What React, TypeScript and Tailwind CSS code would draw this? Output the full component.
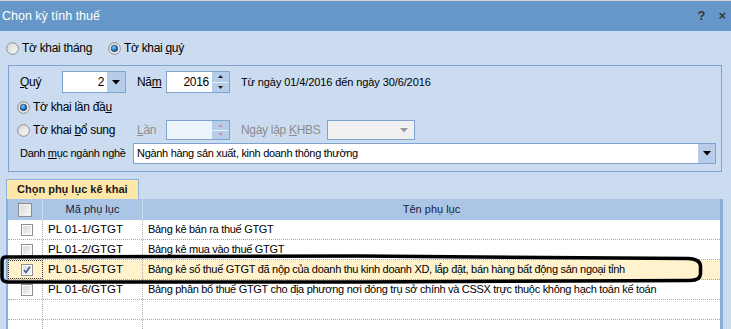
import React from 'react';

const rows = [
  { code: 'PL 01-1/GTGT', name: 'Bảng kê bán ra thuế GTGT', checked: false },
  { code: 'PL 01-2/GTGT', name: 'Bảng kê mua vào thuế GTGT', checked: false },
  {
    code: 'PL 01-5/GTGT',
    name: 'Bảng kê số thuế GTGT đã nộp của doanh thu kinh doanh XD, lắp đặt, bán hàng bất động sản ngoại tỉnh',
    checked: true,
  },
  {
    code: 'PL 01-6/GTGT',
    name: 'Bảng phân bổ thuế GTGT cho địa phương nơi đóng trụ sở chính và CSSX trực thuộc không hạch toán kế toán',
    checked: false,
  },
];

const Radio = ({ on }: { on?: boolean }) => (
  <svg width="13" height="13" viewBox="0 0 13 13" className="shrink-0">
    <defs>
      <linearGradient id="rg" x1="0" y1="0" x2="1" y2="1">
        <stop offset="0" stopColor="#d6d6d6" />
        <stop offset="1" stopColor="#fbfbfb" />
      </linearGradient>
      <radialGradient id="rd" cx="0.4" cy="0.35" r="0.7">
        <stop offset="0" stopColor="#8fd0f5" />
        <stop offset="0.6" stopColor="#1f6fb5" />
        <stop offset="1" stopColor="#0d3f78" />
      </radialGradient>
    </defs>
    <circle cx="6.5" cy="6.5" r="5.8" fill="url(#rg)" stroke="#8a8a8a" strokeWidth="1" />
    {on && <circle cx="6.5" cy="6.5" r="3.3" fill="url(#rd)" stroke="#1b3f6e" strokeWidth="0.6" />}
  </svg>
);

const Check = ({ on, size = 12 }: { on?: boolean; size?: number }) => (
  <svg width={size} height={size} viewBox="0 0 12 12" className="shrink-0">
    <defs>
      <linearGradient id="cg" x1="0" y1="0" x2="1" y2="1">
        <stop offset="0" stopColor="#d8d8d8" />
        <stop offset="1" stopColor="#f6f6f6" />
      </linearGradient>
    </defs>
    <rect x="0.5" y="0.5" width="11" height="11" fill="#fff" stroke="#8f8f8f" />
    <rect x="2" y="2" width="8" height="8" fill="url(#cg)" />
    {on && <path d="M3 6 L5 8.5 L9 2.8" fill="none" stroke="#3d5f9c" strokeWidth="1.6" />}
  </svg>
);

const Arrow = ({ color = '#000' }: { color?: string }) => (
  <svg width="8" height="5" viewBox="0 0 8 5">
    <path d="M0 0 H8 L4 4.5 Z" fill={color} />
  </svg>
);

const Spin = ({ value, disabled }: { value?: string; disabled?: boolean }) => (
  <div
    className={
      'flex h-full w-[64px] border border-[#7fa3cf] ' +
      (disabled ? 'bg-[#eef4fb]' : 'bg-white')
    }
  >
    <div className="flex flex-1 items-center justify-end pr-[3px] text-[12px]">{value}</div>
    <div className="flex w-[17px] flex-col bg-[#b6cde9]">
      <div className="flex flex-1 items-center justify-center border-b border-[#e6eef8]">
        <svg width="5" height="3" viewBox="0 0 5 3">
          <path d="M0 3 L2.5 0 L5 3 Z" fill={disabled ? '#c29aa4' : '#222'} />
        </svg>
      </div>
      <div className="flex flex-1 items-center justify-center">
        <svg width="5" height="3" viewBox="0 0 5 3">
          <path d="M0 0 H5 L2.5 3 Z" fill={disabled ? '#c29aa4' : '#222'} />
        </svg>
      </div>
    </div>
  </div>
);

export default function App() {
  return (
    <div className="relative h-[329px] w-[731px] overflow-hidden whitespace-nowrap bg-[#cbdcf1] font-['Liberation_Sans',Arial,sans-serif] text-[11px] tracking-[-0.3px] text-black">
      <div className="h-px bg-[#d2d2d2]" />
      {/* title bar */}
      <div className="flex h-[30px] items-center justify-between bg-[#6598c9] pl-[2px] pr-[5px]">
        <span className="text-[12.5px] tracking-normal text-white">Chọn kỳ tính thuế</span>
        <div className="flex items-center gap-[13px] text-[13px] font-bold tracking-normal text-[#3a3a3a]">
          <span>?</span>
          <span>×</span>
        </div>
      </div>

      {/* monthly / quarterly */}
      <div className="flex h-[34px] items-center pl-[6px] text-[12px]">
        <div className="flex w-[102px] items-center">
          <Radio />
          <span className="ml-[3px]">
            Tờ khai thán<span className="underline">g</span>
          </span>
        </div>
        <Radio on />
        <span className="ml-[3px]">
          Tờ khai <span className="underline">q</span>uý
        </span>
      </div>

      {/* group box */}
      <div className="ml-[8px] flex h-[107px] w-[714px] flex-col border border-[#7fa3cf] pl-[11px] text-[12px]">
        <div className="mt-[5px] flex h-[22px] items-center">
          <span className="w-[42px]">
            <span className="underline">Q</span>uý
          </span>
          <div className="flex h-full w-[64px] border border-[#7fa3cf] bg-white">
            <div className="flex flex-1 items-center justify-end pr-[3px]">2</div>
            <div className="flex w-[18px] items-center justify-center bg-[#b6cde9]">
              <Arrow />
            </div>
          </div>
          <span className="ml-[11px] w-[29px]">
            Nă<span className="underline">m</span>
          </span>
          <Spin value="2016" />
          <span className="ml-[11px] text-[11px] tracking-[-0.1px]">
            Từ ngày 01/4/2016 đến ngày 30/6/2016
          </span>
        </div>

        <div className="mt-[4px] flex h-[20px] items-center">
          <div className="-ml-[3px] flex items-center">
            <Radio on />
            <span className="ml-[3px]">
              Tờ khai lần đầ<span className="underline">u</span>
            </span>
          </div>
        </div>

        <div className="mt-[3px] flex h-[20px] items-center">
          <div className="-ml-[3px] flex w-[120px] items-center">
            <Radio />
            <span className="ml-[3px]">
              Tờ khai <span className="underline">b</span>ổ sung
            </span>
          </div>
          <span className="w-[29px] text-[#8c8c8c]">
            <span className="underline">L</span>ần
          </span>
          <Spin disabled />
          <span className="ml-[11px] w-[86px] text-[#8c8c8c]">
            Ngày lập <span className="underline">K</span>HBS
          </span>
          <div className="flex h-full w-[88px] items-center justify-end border border-[#7fa3cf] bg-[#f0f0f0] pr-[6px]">
            <Arrow color="#9a9a9a" />
          </div>
        </div>

        <div className="mt-[3px] flex h-[21px] items-center">
          <span className="w-[113px] text-[11px]">
            Danh <span className="underline">m</span>ục ngành nghề
          </span>
          <div className="flex h-full w-[583px] border border-[#7fa3cf] bg-white">
            <div className="flex flex-1 items-center pl-[3px] text-[11px]">
              Ngành hàng sản xuất, kinh doanh thông thường
            </div>
            <div className="flex w-[17px] items-center justify-center bg-[#b6cde9]">
              <Arrow />
            </div>
          </div>
        </div>
      </div>

      {/* tab */}
      <div className="ml-[6px] mt-[7px] flex h-[20px] w-[133px] items-center border border-b-0 border-[#8fb1dc] bg-[#fde7a9] pl-[10px] text-[11px] font-bold tracking-normal text-[#1a1a1a]">
        Chọn phụ lục kê khai
      </div>

      {/* grid */}
      <div className="ml-[6px] w-[717px] border-l-2 border-r-[3px] border-[#8aaed9] bg-white">
        <div className="flex h-[21px] bg-[#aac5e6] text-[11px] tracking-normal text-[#202040]">
          <div className="flex w-[35px] items-center justify-center border-r border-[#c9daf0]">
            <Check size={14} />
          </div>
          <div className="flex w-[100px] items-center justify-center border-r border-[#c9daf0]">
            Mã phụ lục
          </div>
          <div className="flex flex-1 items-center justify-center">Tên phụ lục</div>
        </div>
        {[...rows, null, null].map((r, i) => (
          <div
            key={i}
            className={
              'flex h-[20px] border-b border-dotted border-[#a8a8a8] ' +
              (r && r.checked ? 'bg-[#fff2cc]' : 'bg-white')
            }
          >
            <div
              className={
                'flex w-[35px] items-center justify-center border-r border-dotted border-[#a8a8a8] pl-[3px] ' +
                (r && r.checked ? 'outline outline-1 outline-dotted outline-[#333] -outline-offset-1' : '')
              }
            >
              {r && <Check on={r.checked} />}
            </div>
            <div className="flex w-[100px] items-center border-r border-dotted border-[#a8a8a8] pl-[5px] text-[11.5px] tracking-normal">
              {r?.code}
            </div>
            <div className="flex flex-1 items-center pl-[5px]">{r?.name}</div>
          </div>
        ))}
      </div>

      {/* hand-drawn marker around the selected row */}
      <svg
        className="pointer-events-none absolute left-0 top-0"
        width="731"
        height="329"
        viewBox="0 0 731 329"
      >
        <path
          d="M6 257 L360 256 L688 258.5 Q700 259 700.5 266 L700.5 274 Q700 280.5 690 280.5 L360 282 L8 282 Q2 282 2 277 L2 261 Q2 257 6 257 Z"
          fill="none"
          stroke="#000"
          strokeWidth="3.5"
        />
      </svg>
    </div>
  );
}
